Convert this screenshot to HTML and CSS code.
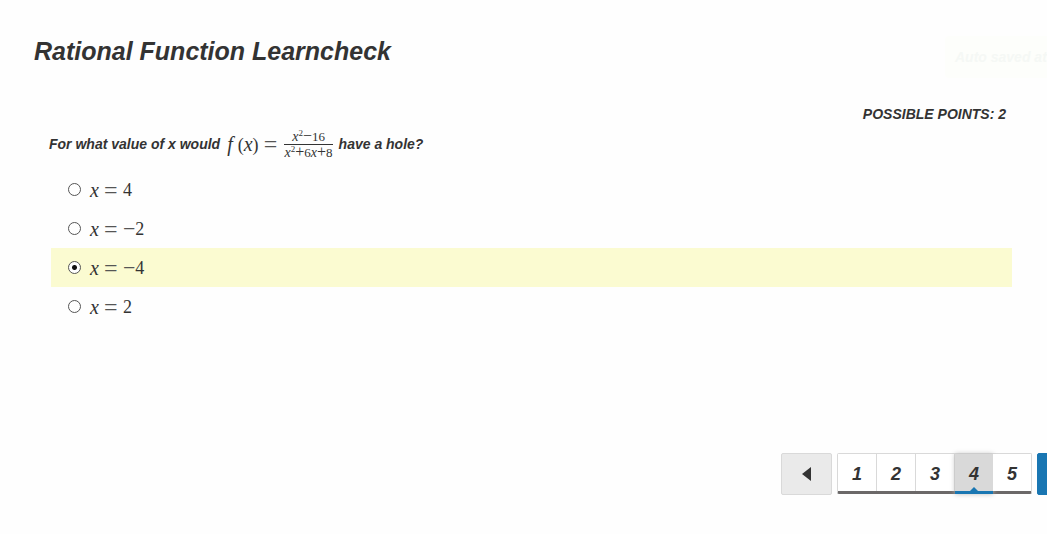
FILE: index.html
```html
<!DOCTYPE html>
<html lang="en">
<head>
<meta charset="utf-8">
<title>Rational Function Learncheck</title>
<link rel="stylesheet" href="styles.css">
</head>
<body>
<main class="page">
  <h1 class="title">Rational Function Learncheck</h1>
  <div class="toast" role="status">Auto saved at</div>
  <p class="points">POSSIBLE POINTS: 2</p>
  <form class="question">
    <p class="prompt" id="prompt">
      <span>For what value of x would</span>
      <span class="math formula">
        <i class="function">f</i><span class="argument">(<i>x</i>)</span><span class="equals">=</span>
        <span class="fraction">
          <span class="numerator"><i>x</i><sup>2</sup><span class="operator">−</span>16</span>
          <span class="denominator"><i>x</i><sup>2</sup><span class="operator">+</span>6<i>x</i><span class="operator">+</span>8</span>
        </span>
      </span>
      <span>have a hole?</span>
    </p>
    <div class="options" role="radiogroup" aria-labelledby="prompt">
      <label class="option"><input class="radio" type="radio" name="answer"><span class="math answer"><i>x</i><span class="equals">=</span><span>4</span></span></label>
      <label class="option"><input class="radio" type="radio" name="answer"><span class="math answer"><i>x</i><span class="equals">=</span><span class="minus">−</span><span>2</span></span></label>
      <label class="option selected"><input class="radio" type="radio" name="answer" checked><span class="math answer"><i>x</i><span class="equals">=</span><span class="minus">−</span><span>4</span></span></label>
      <label class="option"><input class="radio" type="radio" name="answer"><span class="math answer"><i>x</i><span class="equals">=</span><span>2</span></span></label>
    </div>
  </form>
  <nav class="pager" aria-label="Questions">
    <button class="step" type="button" aria-label="Previous"><svg width="9" height="14" viewBox="0 0 9 14"><path d="M9 0v14L0 7z" fill="#333"/></svg></button>
    <div class="numbers">
      <button class="number" type="button">1</button>
      <button class="number" type="button">2</button>
      <button class="number" type="button">3</button>
      <button class="number current" type="button" aria-current="page">4<svg class="marker" width="8" height="4" viewBox="0 0 8 4"><path d="M4 0l4 4H0z" fill="#1976b2"/></svg></button>
      <button class="number" type="button">5</button>
    </div>
    <button class="step next" type="button" aria-label="Next"></button>
  </nav>
</main>
</body>
</html>
```
FILE: styles.css
```css
* { box-sizing: border-box; }
body {
  margin: 0;
  background: #fefefe;
  color: #333;
  font: italic bold 14px/20px "Liberation Sans", Arial, sans-serif;
}
.page {
  position: relative;
  min-height: 100vh;
  overflow: hidden;
}
.title {
  margin: 0;
  padding: 36px 34px 0;
  font-size: 25px;
  line-height: 30px;
}
.toast {
  position: absolute;
  top: 36px;
  right: -10px;
  width: 112px;
  padding: 11px 10px;
  border-radius: 4px;
  background: #fdfefb;
  color: #f5f8f5;
  white-space: nowrap;
}
.points {
  margin: 38px 41px 0;
  text-align: right;
}
.question { padding: 6px 35px 0 49px; }
.prompt {
  display: flex;
  align-items: center;
  gap: 5px;
  height: 28px;
  margin: 0 0 12px;
}
.math {
  font: normal 18px/20px "Liberation Serif", "Times New Roman", serif;
}
.math i { font-size: 20px; }
.formula, .answer {
  display: flex;
  align-items: center;
}
.math .function { font-size: 20px; padding-left: 2px; }
.argument { margin-left: 5px; }
.equals {
  width: 14px;
  margin: 0 5px;
  color: #555;
  font-size: 24px;
  text-align: center;
}
.minus { color: #555; font-size: 22px; }
.fraction {
  display: flex;
  flex-direction: column;
  align-items: center;
  margin-left: 1px;
  font-size: 13px;
  line-height: 15px;
}
.math .fraction i { font-size: 14px; }
.numerator { padding: 0 8px; border-bottom: 1px solid #333; }
.denominator { padding: 0 1px; }
.operator { font-size: 16px; line-height: 1px; }
.fraction sup {
  font-size: 9px;
  line-height: 1px;
}
.options { margin-left: 2px; }
.option {
  display: flex;
  align-items: center;
  gap: 9px;
  height: 39px;
  padding-left: 17px;
}
.selected { background: #fbfbd1; }
.radio {
  appearance: none;
  width: 13px;
  height: 13px;
  margin: 0;
  border: 1px solid #555;
  border-radius: 50%;
  background: #fff;
}
.radio:checked { background: radial-gradient(circle, #111 2px, #fff 3px); }
.pager {
  display: flex;
  gap: 5px;
  justify-content: flex-end;
  margin: 127px -41px 0 0;
}
.step {
  display: flex;
  align-items: center;
  justify-content: center;
  width: 51px;
  height: 42px;
  padding: 0;
  border: 1px solid #d9d9d9;
  border-radius: 2px;
  background: #eaeaea;
}
.next {
  border-color: #1976b2;
  background: #1976b2;
}
.numbers {
  display: flex;
  width: 195px;
  height: 41px;
  border: 1px solid #d9d9d9;
  border-bottom: 3px solid #6b6868;
  border-radius: 2px;
}
.number {
  position: relative;
  flex: 1;
  padding: 2px 0 0;
  border: 0;
  border-right: 1px solid #d9d9d9;
  background: #fff;
  color: #333;
  font: italic bold 18px/20px "Liberation Sans", Arial, sans-serif;
}
.number:last-child { border-right: 0; }
.current {
  margin-bottom: -3px;
  border-right: 0;
  border-bottom: 3px solid #1976b2;
  background: #d9d9d9;
  box-shadow: 0 0 5px #bbb;
}
.marker {
  position: absolute;
  bottom: 0;
  left: calc(50% - 4px);
}
```
